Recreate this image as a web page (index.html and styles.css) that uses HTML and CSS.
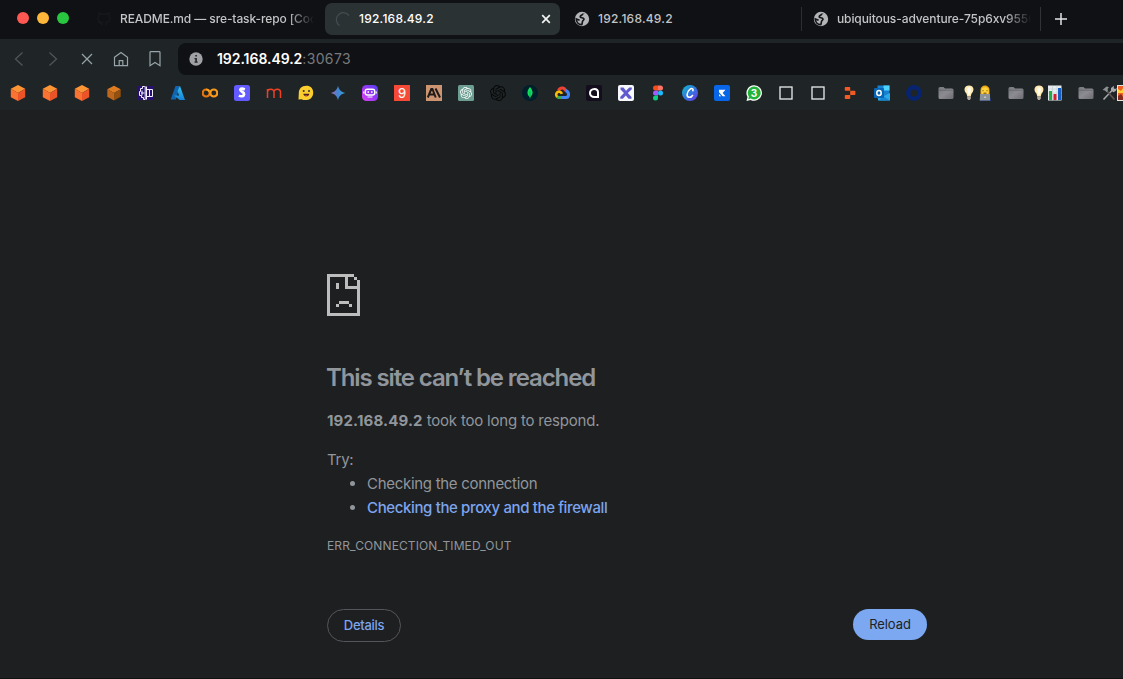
FILE: index.html
```html
<!DOCTYPE html>
<html lang="en">
<head>
<meta charset="utf-8">
<title>192.168.49.2</title>
<link rel="stylesheet" href="styles.css">
</head>
<body>
<svg class="defs" width="0" height="0">
  <defs>
    <linearGradient id="az" x1="0" y1="0" x2="0" y2="1"><stop offset="0" stop-color="#36c3f1"/><stop offset="1" stop-color="#1583d8"/></linearGradient>
    <linearGradient id="gem" x1="0" y1="0" x2="1" y2="0"><stop offset="0" stop-color="#a668a8"/><stop offset=".5" stop-color="#3f86d6"/><stop offset="1" stop-color="#3d9fca"/></linearGradient>
    <linearGradient id="bot" x1="0" y1="1" x2="1" y2="0"><stop offset="0" stop-color="#e044f5"/><stop offset=".5" stop-color="#9737f4"/><stop offset="1" stop-color="#5142ef"/></linearGradient>
    <linearGradient id="canva" x1="0" y1="0" x2="1" y2="1"><stop offset="0" stop-color="#12bed0"/><stop offset=".5" stop-color="#3277dc"/><stop offset="1" stop-color="#7132ee"/></linearGradient>
    <linearGradient id="fold" x1="0" y1="0" x2="1" y2="1"><stop offset="0" stop-color="#77777d"/><stop offset=".5" stop-color="#8b8b91"/><stop offset="1" stop-color="#6c6c72"/></linearGradient>
    <symbol id="cube" viewBox="0 0 16 16"><path d="M8 0l7.2 3.8L8 8 .8 3.8z" fill="#fd9435"/><path d="M.8 3.8L8 8v8L.8 12.2z" fill="#fa7333"/><path d="M15.200 3.800L8 8v8l7.200-3.800z" fill="#ea5427"/></symbol>
    <symbol id="globe" viewBox="0 0 16 16"><circle cx="8" cy="8" r="7.200" fill="#b4b5b7"/><path d="M9.600 2.300C9.400 4.300 6.300 3.900 6.200 5.700c0 1.300 3 .7 3.700 2.100.5 1.200-.9 1.600-1.300 2.400-.5.900 0 2-.9 3.500C4.500 13.500 2.300 11 2.300 8l3.300 1.200" fill="none" stroke="#151619" stroke-width="1.700"/><path d="M9.500 2.300l4.300 4.300-2.600.9L9.300 5z" fill="#b4b5b7"/></symbol>
    <symbol id="knot" viewBox="0 0 24 24"><path d="M22.2819 9.8211a5.9847 5.9847 0 0 0-.5157-4.9108 6.0462 6.0462 0 0 0-6.5098-2.9A6.0651 6.0651 0 0 0 4.9807 4.1818a5.9847 5.9847 0 0 0-3.9977 2.9 6.0462 6.0462 0 0 0 .7427 7.0966 5.98 5.98 0 0 0 .511 4.9107 6.051 6.051 0 0 0 6.5146 2.9001A5.9847 5.9847 0 0 0 13.2599 24a6.0557 6.0557 0 0 0 5.7718-4.2058 5.9894 5.9894 0 0 0 3.9977-2.9001 6.0557 6.0557 0 0 0-.7475-7.0729zm-9.022 12.6081a4.4755 4.4755 0 0 1-2.8764-1.0408l.1419-.0804 4.7783-2.7582a.7948.7948 0 0 0 .3927-.6813v-6.7369l2.02 1.1686a.071.071 0 0 1 .038.052v5.5826a4.504 4.504 0 0 1-4.4945 4.4944zm-9.6607-4.1254a4.4708 4.4708 0 0 1-.5346-3.0137l.142.0852 4.783 2.7582a.7712.7712 0 0 0 .7806 0l5.8428-3.3685v2.3324a.0804.0804 0 0 1-.0332.0615L9.74 19.9502a4.4992 4.4992 0 0 1-6.1408-1.6464zM2.3408 7.8956a4.485 4.485 0 0 1 2.3655-1.9728V11.6a.7664.7664 0 0 0 .3879.6765l5.8144 3.3543-2.0201 1.1685a.0757.0757 0 0 1-.071 0l-4.8303-2.7865A4.504 4.504 0 0 1 2.3408 7.872zm16.5963 3.8558L13.1038 8.364 15.1192 7.2a.0757.0757 0 0 1 .071 0l4.8303 2.7913a4.4944 4.4944 0 0 1-.6765 8.1042v-5.6772a.79.79 0 0 0-.407-.667zm2.0107-3.0231l-.142-.0852-4.7735-2.7818a.7759.7759 0 0 0-.7854 0L9.409 9.2297V6.8974a.0662.0662 0 0 1 .0284-.0615l4.8303-2.7866a4.4992 4.4992 0 0 1 6.6802 4.66zM8.3065 12.863l-2.02-1.1638a.0804.0804 0 0 1-.038-.0567V6.0742a4.4992 4.4992 0 0 1 7.3757-3.4537l-.142.0805L8.704 5.459a.7948.7948 0 0 0-.3927.6813zm1.0976-2.3654l2.602-1.4998 2.6069 1.4998v2.9994l-2.5974 1.4997-2.6067-1.4997Z"/></symbol>
    <symbol id="folder" viewBox="0 0 16 16"><path d="M.5 3.500Q.5 2 2 2h3.500l1.500 1.500H14q1.500 0 1.500 1.500v7.500q0 1.500-1.500 1.500H2Q.5 14 .5 12.500z" fill="url(#fold)"/><path d="M.6 5.200h14.800" stroke="#5f5f65" stroke-width=".7"/></symbol>
    <symbol id="bulb" viewBox="0 0 12 16"><path d="M6 .5c-5 0-5.500 4.800-3 7.500.8 1 1 2.200 1.200 3.500h3.600C8 10.200 8.200 9 9 8c2.500-2.700 2-7.500-3-7.500z" fill="#ffe9ae"/><path d="M6 2c-2 0-2.500 3-.5 8h1c2-5 1.500-8-.5-8z" fill="#fffdf0"/><path d="M4.200 11.500h3.600v2L6.800 15H5.200l-1-1.500z" fill="#b5aaa0"/></symbol>
  </defs>
</svg>

<header class="browser">
  <div class="tabs">
    <div class="lights"><i class="red"></i><i class="yellow"></i><i class="green"></i></div>
    <div class="tab tab-readme">
      <svg class="fav" viewBox="0 0 16 16"><path d="M6 14.500v-3C1 11 1.500 6.500 3 5V2l3 1.300h4L13 2v3c1.500 1.500 2 6-3 6.500v3M2 11l3 2" fill="none" stroke="#17181b" stroke-width="1.500"/></svg>
      <span class="label faded">README.md — sre-task-repo [Coc</span>
    </div>
    <div class="tab tab-active">
      <svg class="fav" viewBox="0 0 16 16"><path d="M4.500 14.500A7 7 0 1 1 14 4.500" fill="none" stroke="#454d50" stroke-width="1.300"/></svg>
      <span class="label ip">192.168.49.2</span>
      <svg class="close" viewBox="0 0 10 10"><path d="M1.200 1.200l7.600 7.600M8.800 1.200L1.200 8.800" stroke="#f2f3f3" stroke-width="1.700"/></svg>
    </div>
    <div class="tab tab-ip">
      <svg class="fav"><use href="#globe"/></svg>
      <span class="label ip">192.168.49.2</span>
    </div>
    <div class="tab tab-space">
      <svg class="fav"><use href="#globe"/></svg>
      <span class="label faded">ubiquitous-adventure-75p6xv9550</span>
    </div>
    <svg class="plus" viewBox="0 0 12 12"><path d="M6 0v12M0 6h12" stroke="#e3e4e5" stroke-width="1.500"/></svg>
  </div>

  <div class="toolbar">
    <nav class="nav">
      <svg viewBox="0 0 18 18"><path d="M12.500 2.500L5.500 9l7 6.500" stroke="#51575a"/></svg>
      <svg viewBox="0 0 18 18"><path d="M5.500 2.500l7 6.500-7 6.500" stroke="#51575a"/></svg>
      <svg viewBox="0 0 18 18"><path d="M4 4l10 10M14 4L4 14"/></svg>
      <svg viewBox="0 0 18 18"><path d="M2.500 7.300L9 2.500l6.500 4.800v8.400h-13zM7.200 15.700v-5h3.600v5"/></svg>
      <svg viewBox="0 0 18 18"><path d="M4 2.500q0-.8.800-.8h8.400q.8 0 .8.800v13.200l-5-3.200-5 3.200z"/></svg>
    </nav>
    <div class="address">
      <svg class="info" viewBox="0 0 14 14"><circle cx="7" cy="7" r="6.700" fill="#9fa1a4"/><path d="M6.300 3h1.600v1.500H6.300zM5.500 6h2.400v3.500h.8v1.200H5.500V9.500h.8V7.200h-.8z" fill="#24262a"/></svg>
      <span class="host">192.168.49.2</span><span class="port">:30673</span>
    </div>
  </div>

  <div class="bookmarks">
    <svg><use href="#cube"/></svg>
    <svg><use href="#cube"/></svg>
    <svg><use href="#cube"/></svg>
    <svg viewBox="0 0 16 16"><path d="M8 .7l6.700 3.500L8 8 1.300 4.200z" fill="#df7c22"/><path d="M1.300 4.200L8 8v7.500l-6.700-3.700z" fill="#bd671c"/><path d="M14.700 4.200L8 8v7.500l6.700-3.700z" fill="#94500e"/></svg>
    <svg viewBox="0 0 16 16"><path d="M0 1h16v14H0z" fill="#29106f"/><path d="M6.500 1.500h-2v2h-2v3h-1v4h2v2h2v2h1.700V1.500zM8.500 1.500v13M8.500 4.500h6v7h-6M11.500 4.500v7M3 8h3.500M4 5.500v5" fill="none" stroke="#f4f1ff" stroke-width="1"/></svg>
    <svg viewBox="0 0 16 16"><path d="M5.500 1H10L5.800 14.500H.7z" fill="#1265ad"/><path d="M10 1l5 14H9.700L4 10.500h5L7.500 6z" fill="url(#az)"/></svg>
    <svg viewBox="0 0 16 16"><g fill="none" stroke-width="2.200"><circle cx="4.200" cy="8" r="3.500" stroke="#e77510"/><circle cx="11.800" cy="8" r="3.500" stroke="#f99a1c"/><path d="M7.200 6.400A3.500 3.500 0 0 0 4.200 4.500" stroke="#fba719"/></g></svg>
    <svg viewBox="0 0 16 16"><rect width="16" height="16" rx="2.500" fill="#635bff"/><path d="M10.800 4.400Q7 2.700 6.300 4.700c-.5 2 4.200 2.100 3.800 4.600-.4 2.400-3.200 2.300-5.200 1.300" fill="none" stroke="#fff" stroke-width="2.700"/></svg>
    <svg viewBox="0 0 16 16"><path d="M1.500 13V4M1.500 7C1.500 3.700 8 3.200 8 7v6M8 7c0-3.800 6.500-3.300 6.500 0v6" fill="none" stroke="#ef4024" stroke-width="1.500"/></svg>
    <svg viewBox="0 0 16 16"><path d="M8.500.8C3.500.8.800 4 .8 8l-.3 6.500 3-.3C8 16.500 15.300 14.500 15.200 7.500 15.200 3.500 12.300.8 8.500.8z" fill="#fccf2e"/><circle cx="5.700" cy="6" r="1" fill="#322e2e"/><circle cx="11" cy="6" r="1" fill="#322e2e"/><path d="M5.300 8.700h6c-.5 3.500-5.400 3.500-6 0z" fill="#4b2525"/><path d="M6.700 10.700q1.500-1 3 0-1.500 1.100-3 0z" fill="#f15b51"/></svg>
    <svg viewBox="0 0 16 16"><path d="M8 .8C9 5 11 7 15.200 8 11 9 9 11 8 15.200 7 11 5 9 .8 8 5 7 7 5 8 .8z" fill="url(#gem)"/></svg>
    <svg viewBox="0 0 16 16"><rect width="16" height="16" rx="4.500" fill="url(#bot)"/><rect x="3.300" y="4.300" width="9.400" height="5.700" rx="2" fill="none" stroke="#fff" stroke-width="1.400"/><path d="M6.200 6v2M9.800 6v2M5.500 12h5M1.800 6.500v2M14.200 6.500v2" stroke="#fff" stroke-width="1.200"/></svg>
    <svg viewBox="0 0 16 16"><path d="M0 0h16v16H0z" fill="#f44a37"/><text x="8" y="12.500" class="g-nine">9</text></svg>
    <svg viewBox="0 0 16 16"><path d="M0 0h16v16H0z" fill="#cc9471"/><path d="M1.800 12.500L5.300 4h1.100l3.300 8.500M3.300 9.500h5M9.500 3.500l4.500 9" fill="none" stroke="#1e1b19" stroke-width="2"/></svg>
    <svg viewBox="0 0 16 16"><rect width="16" height="16" rx="1.500" fill="#6c9f91"/><use href="#knot" x="2" y="2" width="12" height="12" fill="#fff"/></svg>
    <svg viewBox="0 0 16 16"><use href="#knot" fill="#080909"/></svg>
    <svg viewBox="0 0 16 16"><circle cx="8" cy="8" r="8" fill="#001e2b"/><path d="M8 2c3.800 4.400 3 8-.1 10.300C4.800 9.800 4.500 6 8 2z" fill="#11df5d"/><path d="M8 6v7.500" stroke="#0aa950" stroke-width=".8"/></svg>
    <svg viewBox="0 0 16 16"><g fill="none" stroke-width="3"><path d="M4.500 5.800C6 2 10.500 2.300 11.700 6" stroke="#ea4335"/><path d="M11.500 5.500C16 7.200 15 12.500 12 12.500H8" stroke="#4285f4"/><path d="M8 12.500H4.500L2.800 11.500" stroke="#34a853"/><path d="M3 12c-2-2.500-.4-5.200 2-5.200 1.500 0 2.500 1 2.800 2" stroke="#fbbc05" stroke-width="2.600"/></g></svg>
    <svg viewBox="0 0 16 16"><rect width="16" height="16" rx="2" fill="#130d1d"/><path d="M8.500 4C2.500 4 2.500 12 8.500 12H12V7.500C12 5.500 10.500 4 8.500 4z" fill="none" stroke="#fff" stroke-width="2"/></svg>
    <svg viewBox="0 0 16 16"><rect width="16" height="16" rx="2" fill="#f8f8ff"/><path d="M2.500 2.500h3l2.500 3.300 3.300-3.300h2.500v1.800L9.800 8l3.700 4v1.800h-3L7.800 10.500l-3 3.300H2.300v-2L6 8 2.500 4.500z" fill="#5f5bcf"/></svg>
    <svg viewBox="0 0 16 16"><path d="M8 .5H5.500a2.500 2.500 0 0 0 0 5H8z" fill="#f24e1e"/><path d="M8 .5h2.500a2.500 2.500 0 0 1 0 5H8z" fill="#ff7262"/><path d="M8 5.500H5.500a2.500 2.500 0 0 0 0 5H8z" fill="#a259ff"/><circle cx="10.500" cy="8" r="2.500" fill="#1abcfe"/><path d="M8 10.500H5.500A2.500 2.500 0 1 0 8 13z" fill="#0acf83"/></svg>
    <svg viewBox="0 0 16 16"><circle cx="8" cy="8" r="8" fill="url(#canva)"/><path d="M10.500 6.300c1.700-2.300-.5-3.800-2.800-1.800C4.500 7.200 4.200 12 7 12.300c1.700.2 3-.8 3.900-2.300" fill="none" stroke="#fff" stroke-width="1.500"/></svg>
    <svg viewBox="0 0 16 16"><rect width="16" height="16" rx="2" fill="#0866e8"/><path d="M5 4.700h6.500L8.600 8l2.900 3.300H8.700L5 7.300zM5 9l2.200 2.300H5z" fill="#fff"/></svg>
    <svg viewBox="0 0 16 16"><path d="M8 .2a7.800 7.800 0 1 1-3.500 14.700L.5 16l1-4A7.800 7.800 0 0 1 8 .2z" fill="#fff"/><path d="M8 1.500a6.500 6.500 0 1 1-3.300 12L2.200 14.200l.7-2.500A6.500 6.500 0 0 1 8 1.500z" fill="#23b33a"/><text x="8" y="11.700" class="g-three">3</text></svg>
    <svg viewBox="0 0 16 16"><rect x="2" y="2" width="12" height="12" fill="none" stroke="#eceded" stroke-width="1.300"/></svg>
    <svg viewBox="0 0 16 16"><rect x="2" y="2" width="12" height="12" fill="none" stroke="#eceded" stroke-width="1.300"/></svg>
    <svg viewBox="0 0 16 16"><path d="M3.500 2h4q.7 0 .7.700v3.100H3.500q-.7 0-.7-.7V2.700Q2.800 2 3.500 2zM8.200 5.800h4.500q.7 0 .7.700v2.800q0 .7-.7.700H8.200zM3.500 10h4.700v3.200q0 .7-.7.700h-4q-.7 0-.7-.7v-2.500q0-.7.7-.7z" fill="#f15a24"/></svg>
    <svg viewBox="0 0 16 16"><path d="M3.500.5h12v13h-12z" fill="#1681cf"/><path d="M9.500.5h6v5h-6z" fill="#4dd2fc"/><path d="M4 8l6 3 6-3v7.500H4z" fill="#2ca9e8"/><path d="M9 11l7 4.500H5z" fill="#1587d4"/><rect y="3" width="10" height="10" rx="1" fill="#0864b5"/><ellipse cx="5" cy="8" rx="2.200" ry="2.500" fill="none" stroke="#fff" stroke-width="1.500"/></svg>
    <svg viewBox="0 0 16 16"><circle cx="8" cy="8" r="5.700" fill="none" stroke="#06246f" stroke-width="4.400"/></svg>
    <span class="group">
      <svg><use href="#folder"/></svg>
      <span class="pair">
        <svg class="bulb"><use href="#bulb"/></svg>
        <svg viewBox="0 0 16 16"><path d="M2 16q0-5 3-5.500h6q3 .5 3 5.500z" fill="#253c7f"/><path d="M3.500 10V5C3.500-1 12.500-1 12.500 5v5z" fill="#f0aa16"/><ellipse cx="8" cy="6.300" rx="3.600" ry="4" fill="#ffd33d"/><path d="M5.500 5.700h1M9.500 5.700h1M6.500 8.200h3" stroke="#6c4a19"/><path d="M3 9h10v6.500H3z" fill="#8b9299"/><path d="M7.300 11.500h1.500V13H7.300z" fill="#d2d5d7"/></svg>
      </span>
    </span>
    <span class="group">
      <svg><use href="#folder"/></svg>
      <span class="pair">
        <svg class="bulb"><use href="#bulb"/></svg>
        <svg viewBox="0 0 16 16"><path d="M1 .5h13.500v15H1z" fill="#e6edf0"/><path d="M1 4h13.500M1 8h13.500M1 12h13.500M5.500.5v15M10 .5v15" stroke="#b8c5ca" stroke-width=".5"/><path d="M2 6h3v9H2z" fill="#20ae42"/><path d="M6.500 9h3v6h-3z" fill="#d42131"/><path d="M11 3h3v12h-3z" fill="#155fc1"/></svg>
      </span>
    </span>
    <span class="group">
      <svg><use href="#folder"/></svg>
      <span class="pair tools">
        <svg viewBox="0 0 16 16"><path d="M2.500 14.500L11 5.500" stroke="#a8abad" stroke-width="1.500"/><path d="M5 5l8.500 9.500" stroke="#5e5551" stroke-width="1.800"/><path d="M1.500 5L5.500 1.500l2.500.8L6.500 4 7 5.500 5.500 7 4 5.500z" fill="#8c9193"/><path d="M10 5.500V3l3-2.200-.3 2.400 1.500.8L16 3l-1 2.800-2.500 1.400z" fill="#a8abad"/></svg>
        <svg viewBox="0 0 16 16"><path d="M0 0h16v16H0z" fill="#e6e4df"/><path d="M1 1h14v14H1z" fill="#ed6027"/><path d="M1 4l3 2 3-4v6H1z" fill="#ffd13b"/><path d="M1 11l3-2 4 6H1z" fill="#842b1f"/></svg>
      </span>
    </span>
  </div>
</header>

<main class="error-page">
  <svg class="sad" viewBox="0 0 11 14" shape-rendering="crispEdges"><path d="M0 0h9v1h1v1h1v12H0zM1 1v12h9V5H6V1zM7 1v3h3V2H9V1zM3 3h1v2H3zM4 9h3.330v1H4zM3 10h1v1H3zM7.330 10h1v1h-1z" fill="#bdbdbd" fill-rule="evenodd"/></svg>
  <h1>This site can’t be reached</h1>
  <p class="summary"><strong>192.168.49.2</strong><span class="rest"> took too long to respond.</span></p>
  <div class="suggest">
    <p>Try:</p>
    <ul>
      <li><span class="tip">Checking the connection</span></li>
      <li><a class="link">Checking the proxy and the firewall</a></li>
    </ul>
  </div>
  <p class="code">ERR_CONNECTION_TIMED_OUT</p>
  <div class="actions">
    <button class="btn details">Details</button>
    <button class="btn reload">Reload</button>
  </div>
</main>
</body>
</html>
```

FILE: styles.css
```css
* { box-sizing: border-box; }
body {
  margin: 0;
  width: 1123px;
  height: 679px;
  overflow: hidden;
  background: #1e1f21;
  color: #90969b;
  font-family: Inter, "Liberation Sans", sans-serif;
  border-bottom: 1px solid #101113;
}
.defs { display: block; }
svg { display: block; flex: none; }
.browser { height: 110px; background: #1f2527; overflow: hidden; }

/* Tab strip */
.tabs {
  display: flex;
  height: 39px;
  padding: 3px 0 4px;
  background: #101114;
  font-size: 12px;
  font-weight: 500;
}
.lights { display: flex; align-items: center; gap: 8px; width: 90px; padding: 0 0 2px 17px; }
.lights i { width: 12px; height: 12px; border-radius: 50%; }
.red { background: #ff5852; }
.yellow { background: #feb73a; }
.green { background: #29c63f; }
.tab {
  display: flex;
  align-items: center;
  height: 32px;
  color: #c3c4c6;
  letter-spacing: -0.1px;
}
.tab .fav { width: 16px; height: 16px; margin-right: 8px; }
.label { white-space: nowrap; padding-bottom: 2px; }
.ip { letter-spacing: 0.22px; }
.faded {
  width: 194px;
  -webkit-mask-image: linear-gradient(to right, #000 calc(100% - 26px), transparent);
  mask-image: linear-gradient(to right, #000 calc(100% - 26px), transparent);
}
.tab-readme { width: 235px; padding: 0 10px 0 6px; }
.tab-active { width: 235px; padding: 0 9px 0 10px; background: #2b3234; border-radius: 7px; color: #fff; }
.close { width: 10px; height: 10px; margin-left: auto; }
.tab-ip { width: 242px; padding: 0 14px; border-right: 1px solid #2c2e31; }
.tab-space { width: 239px; padding: 0 7px 0 11px; border-right: 1px solid #303235; }
.tab-ip, .tab-space { height: 24px; margin-top: 4px; }
.plus { width: 12px; height: 12px; margin: 10px 0 0 14px; }

/* Navigation and address */
.toolbar { display: flex; padding-top: 4px; height: 36px; }
.nav { display: flex; align-items: center; gap: 16px; width: 178px; padding-left: 10px; }
.nav svg { width: 18px; height: 18px; fill: none; stroke: #98a4a9; stroke-width: 1.2; }
.address {
  display: flex;
  align-items: center;
  flex: 1;
  height: 32px;
  padding-left: 11px;
  background: #101114;
  border-radius: 8px 0 0 8px;
  font-size: 14px;
}
.info { width: 14px; height: 14px; margin-right: 14px; }
.host { color: #fff; font-weight: 600; letter-spacing: -0.05px; padding-bottom: 1px; }
.port { color: #777a7d; letter-spacing: 0.35px; padding-bottom: 1px; }

/* Bookmark icons */
.bookmarks { display: flex; align-items: center; gap: 16px; height: 35px; padding-left: 10px; }
.bookmarks svg { width: 16px; height: 16px; }
.bookmarks .bulb { width: 12px; }
.group { display: flex; flex: none; align-items: center; gap: 9px; width: 54px; }
.pair { display: flex; gap: 2px; }
.tools { gap: 0; margin-left: -2px; }
.g-nine { font: 500 13px Inter, sans-serif; fill: #fff3ed; text-anchor: middle; }
.g-three { font: 700 10px Inter, sans-serif; fill: #fff; text-anchor: middle; }

/* Network error */
.error-page { width: 600px; margin-left: 327px; padding-top: 164px; }
.sad { width: 33px; height: 42px; }
h1 { margin: 46px 0 0 -1px; font-size: 24px; font-weight: 600; line-height: 32px; letter-spacing: -1.12px; }
p { margin: 0; }
.summary { margin-top: 15px; font-size: 15px; line-height: 24px; white-space: pre; }
.summary strong { font-weight: 700; letter-spacing: 0.15px; }
.rest { letter-spacing: -0.2px; }
.suggest { margin-top: 15px; font-size: 15px; line-height: 24px; letter-spacing: -0.29px; }
ul { margin: 0; padding-left: 40px; }
.link { color: #7ca5ee; font-weight: 500; letter-spacing: -0.37px; }
.code { margin-top: 17px; font-size: 12px; line-height: 18px; letter-spacing: 0.12px; }
.actions { display: flex; justify-content: space-between; align-items: flex-start; margin-top: 54px; }
.btn {
  width: 74px;
  padding: 0 0 2px;
  border-radius: 17px;
  font-family: Inter, "Liberation Sans", sans-serif;
  font-size: 13px;
  letter-spacing: -0.1px;
}
.details { height: 33px; border: 1px solid #53565a; background: transparent; color: #7ca5ee; font-weight: 500; letter-spacing: -0.3px; }
.reload { height: 31px; border: 0; background: #7ba8f1; color: #202124; }
```
